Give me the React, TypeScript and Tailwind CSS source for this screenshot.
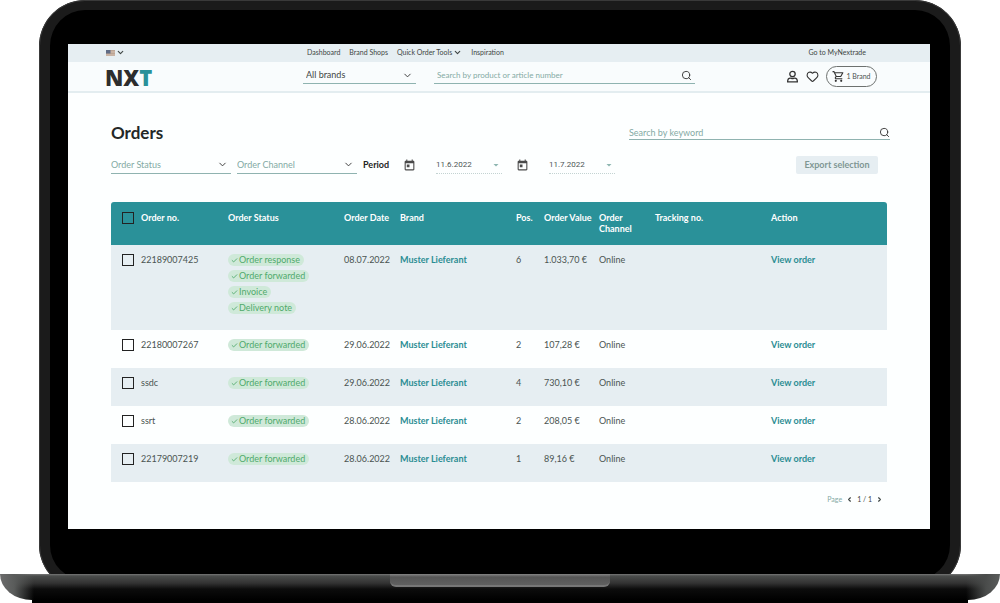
import type { ReactNode } from "react";
import clsx from "clsx";
import { Check, ChevronDown, ChevronLeft, ChevronRight, Heart, Search } from "lucide-react";
import { MdArrowDropDown, MdOutlineShoppingCart, MdToday } from "react-icons/md";

const ORDERS = [
  {
    no: "22189007425",
    status: ["Order response", "Order forwarded", "Invoice", "Delivery note"],
    date: "08.07.2022",
    brand: "Muster Lieferant",
    pos: 6,
    value: "1.033,70 €",
    channel: "Online",
  },
  {
    no: "22180007267",
    status: ["Order forwarded"],
    date: "29.06.2022",
    brand: "Muster Lieferant",
    pos: 2,
    value: "107,28 €",
    channel: "Online",
  },
  {
    no: "ssdc",
    status: ["Order forwarded"],
    date: "29.06.2022",
    brand: "Muster Lieferant",
    pos: 4,
    value: "730,10 €",
    channel: "Online",
  },
  {
    no: "ssrt",
    status: ["Order forwarded"],
    date: "28.06.2022",
    brand: "Muster Lieferant",
    pos: 2,
    value: "208,05 €",
    channel: "Online",
  },
  {
    no: "22179007219",
    status: ["Order forwarded"],
    date: "28.06.2022",
    brand: "Muster Lieferant",
    pos: 1,
    value: "89,16 €",
    channel: "Online",
  },
];

const FlagIcon = () => (
  <svg viewBox="0 0 18 12" className="h-[6px] w-[9px]" aria-hidden="true">
    <rect width="18" height="12" fill="#d6c3b4" />
    <path d="M0 1h18M0 4h18M0 7h18M0 10h18" stroke="#b39a88" strokeWidth="1.5" />
    <rect width="9" height="7" fill="#5f6b85" />
  </svg>
);

const PersonIcon = () => (
  <svg viewBox="0 0 24 24" className="size-[13px]" fill="none" stroke="#333" strokeWidth="2.4" strokeLinejoin="round" aria-hidden="true">
    <circle cx="12" cy="7.500" r="5" />
    <path d="M3 22c0-4.500 1.500-7 5-7 1.300 0 2.300.8 4 .8s2.700-.8 4-.8c3.500 0 5 2.500 5 7z" />
  </svg>
);

type SelectProps = {
  label: string;
  className?: string;
};

const SelectField = ({ label, className }: SelectProps) => (
  <div className={clsx("flex items-center border-b", className)}>
    <select aria-label={label} className="w-full min-w-0 appearance-none bg-transparent outline-none">
      <option>{label}</option>
    </select>
    <ChevronDown className="pointer-events-none size-[11px] shrink-0 text-[#333]" />
  </div>
);

const DateField = ({ label, value }: { label: string; value: string }) => (
  <label className="flex items-center gap-[20px]">
    <MdToday className="size-[13px] shrink-0 text-[#4a4a4a]" />
    <span className="flex h-[18px] w-[66px] items-center border-b border-dotted border-[#c3d3d2]">
      <input
        type="text"
        aria-label={label}
        defaultValue={value}
        className="w-full min-w-0 bg-transparent font-[Roboto,sans-serif] text-[8px] text-[#4c5553] outline-none"
      />
      <MdArrowDropDown className="size-[12px] shrink-0 text-[#8db5b0]" />
    </span>
  </label>
);

const Checkbox = ({ label }: { label: string }) => (
  <input
    type="checkbox"
    aria-label={label}
    className="block size-[12px] appearance-none border border-[#222] checked:bg-[#222]"
  />
);

const StatusBadge = ({ children }: { children: ReactNode }) => (
  <span className="flex h-[12px] items-center gap-px rounded-full bg-[#cfe9d9] pr-[4px] pl-[3px] text-[#4fa96c]">
    <Check className="size-[7px]" strokeWidth={3} />
    {children}
  </span>
);

const TopBar = () => (
  <div className="flex h-[18px] items-center bg-[#e6eef2] pr-[64px] pb-px pl-[38px] text-[7px] text-[#3f4644]">
    <button type="button" aria-label="Language" className="flex w-[201px] items-center gap-px">
      <FlagIcon />
      <ChevronDown className="size-[9px]" strokeWidth={3} />
    </button>
    <nav className="flex items-center gap-[9px]">
      <a href="#dashboard">Dashboard</a>
      <a href="#shops">Brand Shops</a>
      <a href="#tools" className="flex items-center gap-px">
        Quick Order Tools
        <ChevronDown className="size-[9px]" strokeWidth={3} />
      </a>
      <a href="#inspiration">Inspiration</a>
    </nav>
    <a href="#mynextrade" className="ml-auto">
      Go to MyNextrade
    </a>
  </div>
);

const Header = () => (
  <header className="flex h-[31px] items-center border-b-2 border-[#e3edf0] bg-[#f9fcfd] pr-[53px] pl-[37px]">
    <a href="#home" className="w-[198px] font-['Open_Sans',sans-serif] text-[22px] leading-none font-extrabold text-[#2d2d2d]">
      NX<span className="text-[#2a9199]">T</span>
    </a>
    <SelectField label="All brands" className="h-[15px] w-[113px] border-[#8fb3b0] px-[3px] pb-[2px] text-[9px] text-[#3f4644]" />
    <div className="ml-[18px] flex h-[15px] flex-1 items-center border-b border-[#8fb3b0] px-[3px] pb-[2px]">
      <input
        type="search"
        aria-label="Search by product or article number"
        placeholder="Search by product or article number"
        className="w-full min-w-0 bg-transparent text-[8px] outline-none placeholder:text-[#84aaa4]"
      />
      <Search className="size-[11px] shrink-0 text-[#333]" />
    </div>
    <div className="ml-[91px] flex items-center gap-[7px]">
      <button type="button" aria-label="Account">
        <PersonIcon />
      </button>
      <button type="button" aria-label="Favourites">
        <Heart className="size-[13px] text-[#333]" />
      </button>
      <button type="button" className="flex h-[21px] w-[51px] items-center justify-center gap-px rounded-full border border-[#6d716f] text-[7px] text-[#4c5250]">
        <MdOutlineShoppingCart className="size-[13px] text-[#333]" />1 Brand
      </button>
    </div>
  </header>
);

const OrdersTable = () => (
  <table className="mt-[28px] w-full table-fixed text-left text-[9px] leading-[12px] text-[#4a5451]">
    <colgroup>
      <col className="w-[30px]" />
      <col className="w-[87px]" />
      <col className="w-[116px]" />
      <col className="w-[56px]" />
      <col className="w-[116px]" />
      <col className="w-[28px]" />
      <col className="w-[55px]" />
      <col className="w-[56px]" />
      <col className="w-[116px]" />
      <col className="w-[116px]" />
    </colgroup>
    <thead>
      <tr className="h-[43px] bg-[#2a9199] align-top leading-[11px] text-white [&>th]:pt-[10px]">
        <th className="rounded-tl-[3px] pl-[11px]">
          <Checkbox label="Select all orders" />
        </th>
        <th>Order no.</th>
        <th>Order Status</th>
        <th>Order Date</th>
        <th>Brand</th>
        <th>Pos.</th>
        <th className="whitespace-nowrap">Order Value</th>
        <th>Order Channel</th>
        <th>Tracking no.</th>
        <th className="rounded-tr-[3px]">Action</th>
      </tr>
    </thead>
    <tbody>
      {ORDERS.map((order) => (
        <tr key={order.no} className="h-[38px] align-top odd:bg-[#e6eef2] [&>td]:pt-[9px]">
          <td className="pl-[11px]">
            <Checkbox label={`Select order ${order.no}`} />
          </td>
          <td>{order.no}</td>
          <td>
            <div className={clsx("flex flex-col items-start gap-[4px]", order.status.length > 1 && "pb-[16px]")}>
              {order.status.map((status) => (
                <StatusBadge key={status}>{status}</StatusBadge>
              ))}
            </div>
          </td>
          <td>{order.date}</td>
          <td>
            <a href="#brand" className="font-bold text-[#2b8d93]">
              {order.brand}
            </a>
          </td>
          <td>{order.pos}</td>
          <td>{order.value}</td>
          <td>{order.channel}</td>
          <td></td>
          <td>
            <a href="#order" className="font-bold text-[#2b8d93]">
              View order
            </a>
          </td>
        </tr>
      ))}
    </tbody>
  </table>
);

const OrdersPage = () => (
  <main className="px-[43px] pt-[28px] pb-[24px]">
    <div className="flex items-center justify-between">
      <h1 className="text-[17px] leading-[24px] font-bold text-[#232827]">Orders</h1>
      <div className="-mr-[3px] flex h-[14px] w-[261px] items-center border-b border-[#8fb3b0]">
        <input
          type="search"
          aria-label="Search by keyword"
          placeholder="Search by keyword"
          className="w-full min-w-0 bg-transparent text-[9px] outline-none placeholder:text-[#84aaa4]"
        />
        <Search className="size-[11px] shrink-0 text-[#333]" />
      </div>
    </div>

    <div className="mt-[11px] flex items-center pr-[9px]">
      <SelectField label="Order Status" className="h-[17px] w-[120px] border-[#8fb3b0] pr-[3px] text-[9px] text-[#84aaa4]" />
      <SelectField label="Order Channel" className="ml-[6px] h-[17px] w-[120px] border-[#8fb3b0] pr-[3px] text-[9px] text-[#84aaa4]" />
      <span className="ml-[6px] w-[40px] text-[9px] font-bold text-[#1f2423]">Period</span>
      <div className="flex gap-[14px]">
        <DateField label="Period from" value="11.6.2022" />
        <DateField label="Period to" value="11.7.2022" />
      </div>
      <button type="button" className="ml-auto h-[18px] w-[82px] rounded-[2px] bg-[#e6eef2] text-[9px] font-bold text-[#7f9794]">
        Export selection
      </button>
    </div>

    <OrdersTable />

    <div className="mt-[12px] flex items-center justify-end gap-[4px] pr-[4px] text-[7px] text-[#3f4644]">
      <span className="text-[#84aaa4]">Page</span>
      <button type="button" aria-label="Previous page">
        <ChevronLeft className="size-[7px]" strokeWidth={4} />
      </button>
      <span>1 / 1</span>
      <button type="button" aria-label="Next page">
        <ChevronRight className="size-[7px]" strokeWidth={4} />
      </button>
    </div>
  </main>
);

const LaptopBase = () => (
  <div className="relative -mt-[17px]">
    <div className="h-[26px] rounded-b-[32px_26px] bg-[linear-gradient(90deg,#6b6b6b_0,#5a5c5b_14px,transparent_34px,transparent_calc(100%-34px),#4a4c4b_calc(100%-14px),#5a5c5b_100%),linear-gradient(180deg,#777_0,#4a4c4b_2px,#333_9px,#0c0c0c_15px,#000_100%)]">
      <div className="mx-auto h-[13px] w-[22%] rounded-b-[6px] border-b-2 border-[#777] bg-[linear-gradient(180deg,#848484_0,#555_3px,#606060_100%)]" />
    </div>
    <div className="mx-[32px] h-[4px] border-b border-[#444] bg-black" />
  </div>
);

export default function App() {
  return (
    <div className="bg-white font-[Lato,sans-serif]">
      <div className="mx-[39px] rounded-[46px] border-[11px] border-t-[10px] border-[#1b1b1b] bg-black pt-[34px] pr-[20px] pb-[51px] pl-[18px] outline-1 -outline-offset-1 outline-[#3a3a3a]">
        <div className="bg-[#fdffff]">
          <TopBar />
          <Header />
          <OrdersPage />
        </div>
      </div>
      <LaptopBase />
    </div>
  );
}
